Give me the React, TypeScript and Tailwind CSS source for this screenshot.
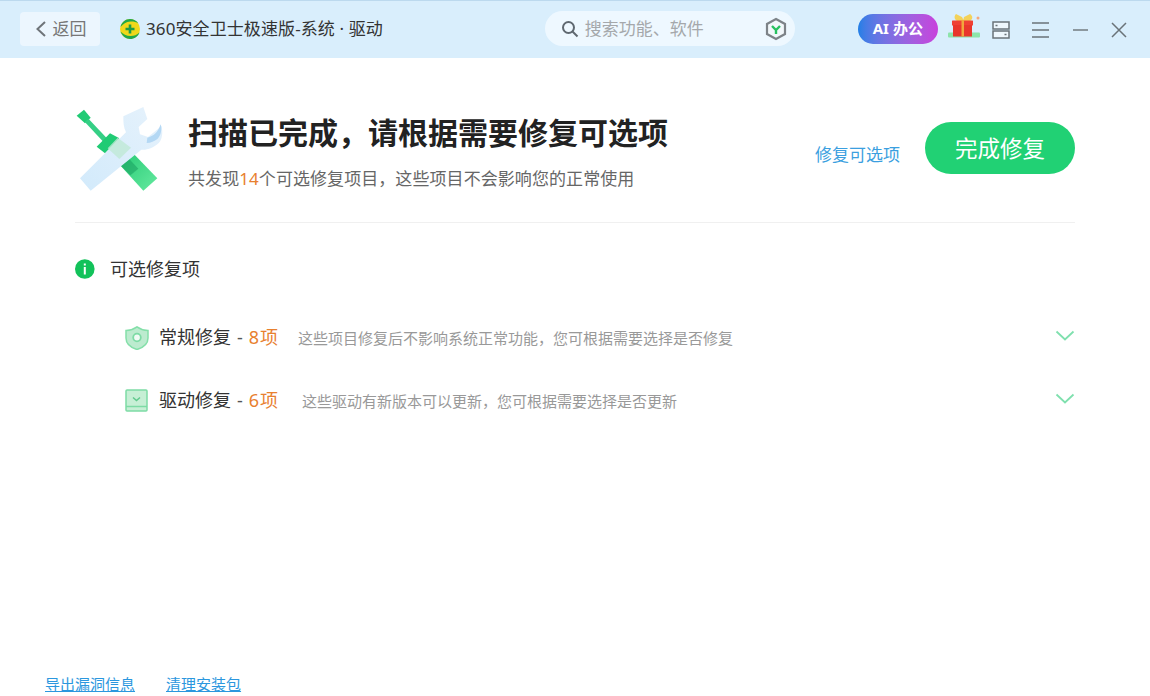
const font = { fontFamily: '"Noto Sans", "Noto Sans CJK SC", sans-serif' };

function Logo360() {
  return (
    <svg width="20" height="20" viewBox="0 0 20 20" className="shrink-0">
      <circle cx="10" cy="10" r="10" fill="#f0d81a" />
      <path d="M0.500 12.500c1.500 4.500 5.500 7.500 9.500 7.500 4.500 0 8-2.500 9.500-6.500-2.500 2.500-5.500 3.500-9 3.500-4 0-7.500-2-10-4.500z" fill="#22a84a" />
      <path d="M0.500 8C1.500 3.500 5.500 0 10 0c3.500 0 6.500 1.500 8.500 4.500C16 2.800 13 2.300 10.500 2.500 6 2.800 3 5 0.500 8z" fill="#22a84a" />
      <path d="M8.700 5.500h2.600v3.200h3.200v2.600h-3.200v3.200H8.700v-3.200H5.500V8.700h3.200z" fill="#1f9d46" />
    </svg>
  );
}

function Gift() {
  return (
    <svg width="34" height="28" viewBox="0 0 34 28" className="shrink-0">
      <rect x="0" y="18.500" width="32" height="5" rx="1" fill="#7fe29a" opacity="0.85" />
      <path d="M8 0l6 3 2 4H9C6 5 6 2 8 0zM22 0l-6 3-1 4h7c3-2 3-5 0-7z" fill="#f3d25a" />
      <rect x="4" y="6.500" width="21" height="5" rx="0.500" fill="#ef4034" />
      <rect x="5" y="11" width="19" height="11.500" fill="#e9352b" />
      <rect x="13.500" y="6" width="2.500" height="16.500" fill="#f1a63c" />
      <circle cx="30" cy="4" r="1.500" fill="#f6a77a" />
    </svg>
  );
}

function Tools() {
  return (
    <svg width="90" height="90" viewBox="45 30 270 270" className="shrink-0">
      <defs>
        <linearGradient id="h" x1="0" y1="0" x2="1" y2="1">
          <stop offset="0" stopColor="#24c873" />
          <stop offset="1" stopColor="#66eaa0" />
        </linearGradient>
        <linearGradient id="w" x1="0" y1="1" x2="1" y2="0">
          <stop offset="0" stopColor="#d2eafb" />
          <stop offset="1" stopColor="#e6f2fc" />
        </linearGradient>
      </defs>
      <path d="M50 62l22-18 20 24-17 17z" fill="#20cb74" />
      <path d="M80 76l58 62" stroke="#35cf85" strokeWidth="15" fill="none" />
      <path d="M110 155l40-40 28 15-43 45z" fill="#20cb74" />
      <path d="M215 170l77 80-42 37-75-82z" fill="url(#h)" />
      <path d="M175 205l24-22 36 38-24 20z" fill="#149a5c" opacity="0.5" />
      <path d="M60 250L198 112c-8-16-8-32-8-48l60-28 12 36-26 24 4 22 24 8 40-32c6 18 2 42-8 50-14 14-36 22-52 20L92 287z" fill="url(#w)" />
      <path d="M143 160l30-32 40 30-35 34z" fill="#bfe8d6" opacity="0.8" />
      <path d="M262 128c18-4 32-16 40-40l2 8c0 18-4 28-12 36-8 6-20 12-32 12z" fill="#b4d8f4" />
    </svg>
  );
}

function Shield() {
  return (
    <svg width="24" height="24" viewBox="0 0 24 24" className="shrink-0">
      <path d="M12 .8c3 2.200 6.500 3.400 11 3.700v7.500c0 5.500-4.500 9.500-11 11.500C5.500 21.500 1 17.500 1 12V4.500C5.500 4.200 9 3 12 .8z" fill="#bcebcf" stroke="#84dfa9" strokeWidth="1.500" />
      <circle cx="12" cy="11.500" r="3.800" fill="#f0fbf5" stroke="#7ddba5" strokeWidth="1.800" />
    </svg>
  );
}

function Driver() {
  return (
    <svg width="23" height="23" viewBox="0 0 23 23" className="shrink-0">
      <rect x="1" y="1" width="21" height="21" rx="1" fill="#c6efd5" stroke="#7ddba5" strokeWidth="1.500" />
      <path d="M1 17.500h21" stroke="#7ddba5" strokeWidth="1.500" />
      <path d="M8 8.500l3.500 3 3.500-3" fill="none" stroke="#5fc98c" strokeWidth="1.500" />
    </svg>
  );
}

function Chevron() {
  return (
    <svg width="20" height="12" viewBox="0 0 20 12" className="shrink-0">
      <path d="M1.500 1.500l8.500 8 8.500-8" fill="none" stroke="#7fe0ae" strokeWidth="1.800" />
    </svg>
  );
}

function Row({ icon, name, count, desc, descClass }: { icon: React.ReactNode; name: string; count: string; desc: string; descClass: string }) {
  return (
    <div className="flex items-center h-[63px] pl-[50px]">
      <div className="w-[34px] flex items-center">{icon}</div>
      <span className="text-[18px] text-[#333]">{name}</span>
      <span className="text-[18px] text-[#555] ml-[6px]">-</span>
      <span className="text-[18px] text-[#e8802f] ml-[6px] tracking-[1px]">{count}</span>
      <span className={`text-[15px] text-[#999] mt-[1px] ${descClass}`}>{desc}</span>
      <div className="ml-auto -mt-[3px]"><Chevron /></div>
    </div>
  );
}

export default function App() {
  return (
    <div className="w-[1150px] h-[696px] bg-white flex flex-col overflow-hidden" style={font}>
      <header className="h-[58px] shrink-0 bg-[#d9eefc] border-t border-[#bcd9ee] flex items-center pl-[20px] pb-[2px]">
        <button className="w-[80px] h-[34px] rounded bg-[#ecf6fe] flex items-center justify-center gap-[6px] pl-[1px] text-[17px] text-[#777]">
          <svg width="12" height="18" viewBox="0 0 12 18"><path d="M10 2L2.500 9l7.500 7" fill="none" stroke="#6f7479" strokeWidth="2" /></svg>
          <span>返回</span>
        </button>
        <div className="ml-[20px]"><Logo360 /></div>
        <span className="ml-[6px] text-[17px] text-[#333] whitespace-nowrap tracking-[0.1px]">360安全卫士极速版-系统 · 驱动</span>
        <div className="ml-[162px] w-[250px] h-[35px] rounded-full bg-[#eef8ff] flex items-center pl-[16px] pr-[8px]">
          <svg width="18" height="18" viewBox="0 0 18 18" className="shrink-0"><circle cx="7.500" cy="7.500" r="5.500" fill="none" stroke="#5f6870" strokeWidth="2" /><path d="M11.500 11.500l5 5" stroke="#5f6870" strokeWidth="2" /></svg>
          <span className="ml-[6px] text-[17px] text-[#a5a8ab]">搜索功能、软件</span>
          <svg width="22" height="24" viewBox="0 0 22 24" className="ml-auto shrink-0">
            <path d="M11 2l9 5v10l-9 5-9-5V7z" fill="#f2f8fb" stroke="#7d8388" strokeWidth="2.200" />
            <path d="M7 9l4 4 4-4M11 13v4" fill="none" stroke="#27c15f" strokeWidth="2.400" />
          </svg>
        </div>
        <div className="ml-[63px] w-[80px] h-[30px] rounded-full bg-gradient-to-r from-[#1f7fe6] to-[#c840dc] flex items-center justify-center text-white text-[15px] font-bold gap-[4px]">
          <span>AI</span><span>办公</span>
        </div>
        <div className="ml-[10px] -mt-[1px]"><Gift /></div>
        <svg width="18" height="18" viewBox="0 0 18 18" className="ml-[10px] mt-[2px] shrink-0">
          <rect x="1" y="1" width="16" height="7" fill="#eef7fd" stroke="#6a7378" strokeWidth="1.500" />
          <rect x="1" y="10" width="16" height="7" fill="#eef7fd" stroke="#6a7378" strokeWidth="1.500" />
          <path d="M3.500 4.500h2M12.500 13.500h2" stroke="#6a7378" strokeWidth="1.500" />
        </svg>
        <svg width="17" height="16" viewBox="0 0 17 16" className="ml-[22px] mt-[2px] shrink-0">
          <path d="M0 1h17M0 8h17M0 15h17" stroke="#6a7378" strokeWidth="1.400" />
        </svg>
        <svg width="15" height="16" viewBox="0 0 15 16" className="ml-[24px] mt-[2px] shrink-0">
          <path d="M0 8h15" stroke="#6a7378" strokeWidth="1.400" />
        </svg>
        <svg width="16" height="16" viewBox="0 0 16 16" className="ml-[23px] mt-[3px] shrink-0">
          <path d="M1 1l14 14M15 1L1 15" stroke="#6a7378" strokeWidth="1.500" />
        </svg>
      </header>

      <main className="flex-1 flex flex-col pl-[75px] pr-[75px]">
        <section className="h-[165px] shrink-0 border-b border-[#f0f0f0] flex items-start">
          <div className="mt-[47px]"><Tools /></div>
          <div className="ml-[23px] mt-[55px]">
            <h1 className="text-[30px] leading-[40px] font-bold text-[#222]">扫描已完成，请根据需要修复可选项</h1>
            <p className="mt-[14px] text-[17px] leading-[24px] text-[#666] tracking-[0.07px]">共发现<span className="text-[#e8802f]">14</span>个可选修复项目，这些项目不会影响您的正常使用</p>
          </div>
          <a className="ml-auto mt-[85px] text-[17px] leading-[24px] text-[#3b9fe0]">修复可选项</a>
          <button className="ml-[25px] mt-[64px] w-[150px] h-[52px] pt-[2px] rounded-full bg-[#21d174] text-white text-[22.5px]">完成修复</button>
        </section>

        <div className="flex items-center mt-[36px] h-[20px]">
          <svg width="20" height="20" viewBox="0 0 20 20" className="shrink-0">
            <circle cx="9.800" cy="10" r="9.800" fill="#12c25a" />
            <rect x="8.800" y="4.500" width="2" height="2" fill="#fff" />
            <rect x="8.800" y="8" width="2" height="7.500" fill="#fff" />
          </svg>
          <span className="ml-[15px] text-[18px] text-[#333]">可选修复项</span>
        </div>

        <div className="mt-[27px] flex flex-col">
          <Row icon={<Shield />} name="常规修复" count="8项" desc="这些项目修复后不影响系统正常功能，您可根据需要选择是否修复" descClass="ml-[19px]" />
          <Row icon={<Driver />} name="驱动修复" count="6项" desc="这些驱动有新版本可以更新，您可根据需要选择是否更新" descClass="ml-[23px]" />
        </div>
      </main>

      <footer className="h-[24px] shrink-0 pl-[45px] flex gap-[31px] text-[15px] leading-[24px] text-[#2b97de] underline">
        <a>导出漏洞信息</a>
        <a>清理安装包</a>
      </footer>
    </div>
  );
}
